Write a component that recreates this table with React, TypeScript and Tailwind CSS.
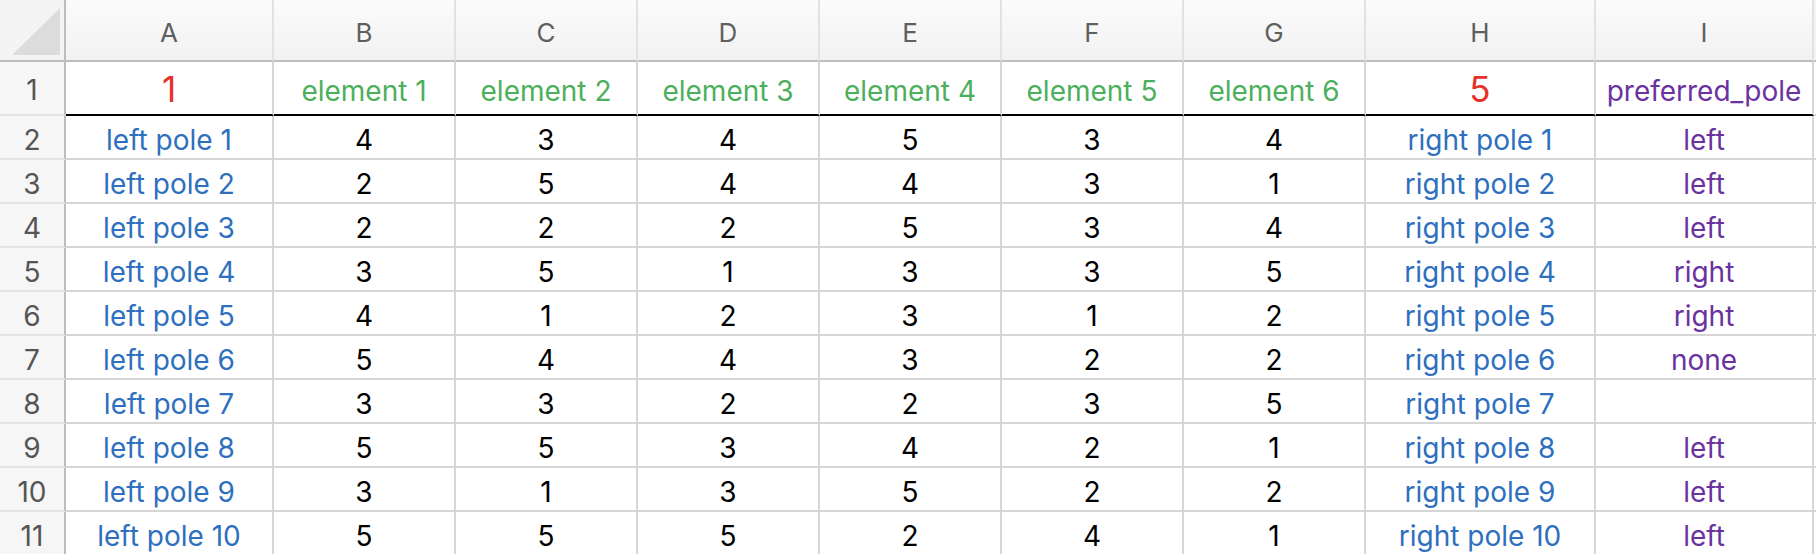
import React from "react";

const font = { fontFamily: "Inter, 'Liberation Sans', sans-serif" };

const columns = ["A", "B", "C", "D", "E", "F", "G", "H", "I"];

const rows: [string, number[], string, string][] = [
  ["left pole 1", [4, 3, 4, 5, 3, 4], "right pole 1", "left"],
  ["left pole 2", [2, 5, 4, 4, 3, 1], "right pole 2", "left"],
  ["left pole 3", [2, 2, 2, 5, 3, 4], "right pole 3", "left"],
  ["left pole 4", [3, 5, 1, 3, 3, 5], "right pole 4", "right"],
  ["left pole 5", [4, 1, 2, 3, 1, 2], "right pole 5", "right"],
  ["left pole 6", [5, 4, 4, 3, 2, 2], "right pole 6", "none"],
  ["left pole 7", [3, 3, 2, 2, 3, 5], "right pole 7", ""],
  ["left pole 8", [5, 5, 3, 4, 2, 1], "right pole 8", "left"],
  ["left pole 9", [3, 1, 3, 5, 2, 2], "right pole 9", "left"],
  ["left pole 10", [5, 5, 5, 2, 4, 1], "right pole 10", "left"],
];

const cell = "flex items-end justify-center border-r-2 border-b-2 border-[#d6d6d6] pb-[4px] text-[28px] leading-none";
const rowHead = "flex items-end justify-center border-r-2 border-b-2 border-r-[#bdbdbd] border-b-[#e4e4e4] bg-[#f6f6f6] pb-[4px] text-[28px] leading-none text-[#555]";
const titleCell = "flex items-end justify-center border-r-2 border-r-[#d6d6d6] border-b-2 border-b-black leading-none";

export default function App() {
  return (
    <div className="h-[554px] w-[1816px] overflow-hidden bg-white" style={font}>
      <div className="grid grid-cols-[66px_208px_182px_182px_182px_182px_182px_182px_230px_218px_1fr] grid-rows-[62px_54px_repeat(10,44px)]">
        {/* column headers */}
        <div className="relative border-r-2 border-b-2 border-[#bdbdbd] bg-[#f4f4f4]">
          <svg className="absolute left-0 top-0" width="64" height="60" viewBox="0 0 64 60">
            <polygon points="12,55 60,55 60,8" fill="#dcdcdc" />
          </svg>
        </div>
        {columns.map((c) => (
          <div
            key={c}
            className="flex items-center justify-center border-r-2 border-b-2 border-r-[#e2e2e2] border-b-[#bdbdbd] bg-gradient-to-b from-[#fbfbfb] to-[#f2f2f2] pt-[6px] text-[26px] leading-none text-[#5f5f5f]"
          >
            {c}
          </div>
        ))}
        <div className="border-b-2 border-[#bdbdbd] bg-[#f4f4f4]" />

        {/* row 1 */}
        <div className="flex items-end justify-center border-r-2 border-b-2 border-r-[#bdbdbd] border-b-[#e4e4e4] bg-[#f6f6f6] pb-[10px] text-[28px] leading-none text-[#555]">1</div>
        <div className={`${titleCell} pb-[7px] text-[35px] text-[#e6322b]`}>1</div>
        {[1, 2, 3, 4, 5, 6].map((n) => (
          <div key={n} className={`${titleCell} pb-[9px] text-[28px] text-[#4caf5c]`}>
            element {n}
          </div>
        ))}
        <div className={`${titleCell} pb-[7px] text-[35px] text-[#e6322b]`}>5</div>
        <div className={`${titleCell} pb-[9px] text-[28px] text-[#6a329f]`}>preferred_pole</div>
        <div className="border-b-2 border-[#d6d6d6]" />

        {/* data rows */}
        {rows.map(([left, nums, right, pref], i) => (
          <React.Fragment key={i}>
            <div className={rowHead}>{i + 2}</div>
            <div className={`${cell} text-[#2e6fbe]`}>{left}</div>
            {nums.map((n, j) => (
              <div key={j} className={`${cell} text-black`}>
                {n}
              </div>
            ))}
            <div className={`${cell} text-[#2e6fbe]`}>{right}</div>
            <div className={`${cell} text-[#6a329f]`}>{pref}</div>
            <div className="border-b-2 border-[#d6d6d6]" />
          </React.Fragment>
        ))}
      </div>
    </div>
  );
}
